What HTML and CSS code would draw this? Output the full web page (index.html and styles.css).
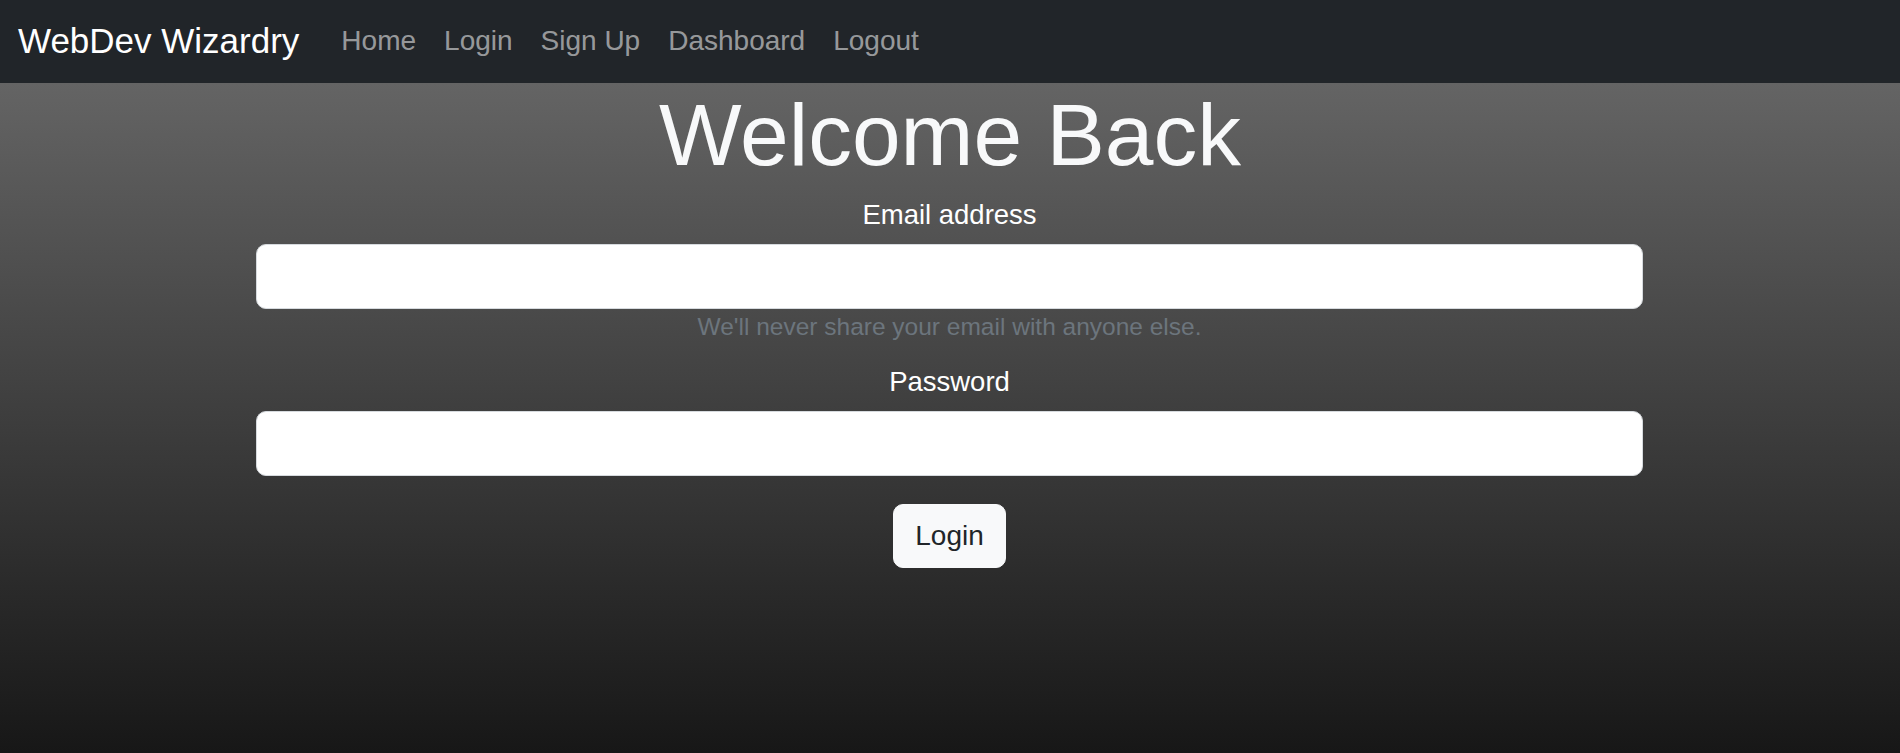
FILE: index.html
```html
<!DOCTYPE html>
<html lang="en">
<head>
<meta charset="utf-8">
<title>WebDev Wizardry - Login</title>
<link rel="stylesheet" href="styles.css">
</head>
<body>
<nav class="navbar">
  <a class="brand" href="#">WebDev Wizardry</a>
  <ul class="nav-links">
    <li><a class="nav-link" href="#">Home</a></li>
    <li><a class="nav-link" href="#">Login</a></li>
    <li><a class="nav-link" href="#">Sign Up</a></li>
    <li><a class="nav-link" href="#">Dashboard</a></li>
    <li><a class="nav-link" href="#">Logout</a></li>
  </ul>
</nav>
<main class="main">
  <h1 class="title">Welcome Back</h1>
  <form class="login-form">
    <label class="field-label label-email" for="email">Email address</label>
    <input class="field-input" type="email" id="email">
    <div class="form-text">We'll never share your email with anyone else.</div>
    <label class="field-label label-password" for="password">Password</label>
    <input class="field-input" type="password" id="password">
    <button class="btn-login" type="button">Login</button>
  </form>
</main>
</body>
</html>
```

FILE: styles.css
```css
* {
  box-sizing: border-box;
}

html, body {
  margin: 0;
  padding: 0;
  height: 100%;
}

body {
  font-family: "Liberation Sans", Arial, Helvetica, sans-serif;
  display: flex;
  flex-direction: column;
  background: #171717;
}

.navbar {
  height: 83px;
  flex: 0 0 83px;
  background: #212529;
  display: flex;
  align-items: center;
  padding: 0 18px;
}

.brand {
  font-size: 35px;
  line-height: 1.5;
  color: #ffffff;
  text-decoration: none;
  margin-right: 28px;
  margin-top: -1px;
}

.nav-links {
  list-style: none;
  margin: 0;
  padding: 0;
  display: flex;
}

.nav-link {
  display: block;
  font-size: 28px;
  line-height: 1.5;
  padding: 0 14px;
  color: rgba(255, 255, 255, 0.55);
  text-decoration: none;
  margin-top: -2px;
}

.main {
  flex: 1;
  background: linear-gradient(to bottom, #646464 0%, #171717 100%);
  display: flex;
  flex-direction: column;
  align-items: center;
}

.title {
  margin: 0;
  font-size: 87.5px;
  line-height: 104px;
  font-weight: 400;
  color: #f8f9fa;
  text-align: center;
}

.login-form {
  width: 1387px;
  margin-left: -1px;
  display: flex;
  flex-direction: column;
  align-items: center;
}

.field-label {
  display: block;
  font-size: 27.5px;
  line-height: 42px;
  color: #ffffff;
  text-align: center;
}

.label-email {
  margin: 7px 0 8px;
}

.label-password {
  margin: 16px 0 8px;
}

.field-input {
  display: block;
  width: 100%;
  height: 65px;
  border: 1px solid #d6dade;
  border-radius: 10px;
  background: #ffffff;
  font-family: inherit;
  font-size: 28px;
  padding: 10px 21px;
}

.form-text {
  font-size: 24.5px;
  line-height: 36px;
  color: #6c757d;
  margin-top: 0;
  text-align: center;
}

.btn-login {
  margin-top: 28px;
  font-family: inherit;
  font-size: 28px;
  line-height: 42px;
  padding: 10px 21px;
  color: #212529;
  background: #f8f9fa;
  border: 1px solid #f8f9fa;
  border-radius: 10px;
}
```
